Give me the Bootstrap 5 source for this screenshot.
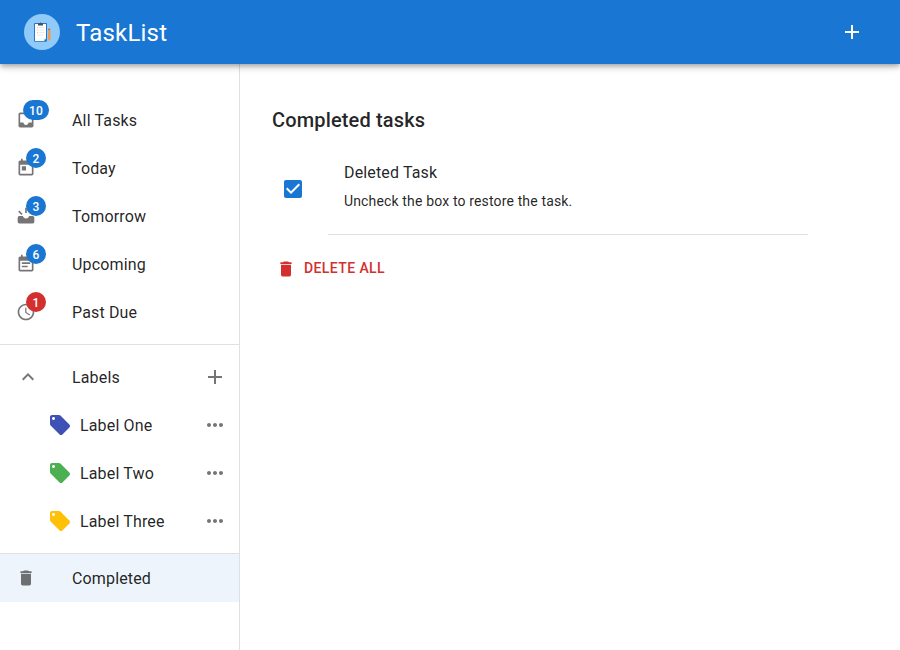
<!DOCTYPE html>
<html lang="en">
<head>
<meta charset="utf-8">
<meta name="viewport" content="width=device-width, initial-scale=1">
<title>TaskList</title>
<link href="https://cdn.jsdelivr.net/npm/bootstrap@5.3.0/dist/css/bootstrap.min.css" rel="stylesheet">
<style>
body{font-family:Roboto,"Liberation Sans",sans-serif;font-size:16px;line-height:24px;letter-spacing:.15px;color:rgba(0,0,0,.87);height:100vh;overflow:hidden}
svg{display:block;fill:currentColor;flex:none}
.i20{width:20px;height:20px}
.i24{width:24px;height:24px}
.appbar{height:64px;padding:0 36px 0 24px;background:#1976d2;z-index:10;box-shadow:0 2px 4px -1px rgba(0,0,0,.2),0 4px 5px 0 rgba(0,0,0,.14),0 1px 10px 0 rgba(0,0,0,.12)}
.brand{font-size:24px;line-height:32px;letter-spacing:.2px;margin-left:16px;padding-top:2px}
.side{width:240px;border-right:1px solid #e0e0e0;padding-top:32px}
.rule{border-top:1px solid #e0e0e0}
.item{height:48px;padding:0 12px 0 16px;color:inherit;text-decoration:none}
.item .lead-icon{width:56px;color:rgba(0,0,0,.54)}
.item .item-text{padding-top:2px}
.item.sub{padding-left:48px}
.item.sub .tag-icon{width:32px}
.item .act{color:rgba(0,0,0,.54)}
.item.active{background:rgba(25,118,210,.08)}
.count{position:absolute;left:20px;top:0;transform:translate(-50%,-50%);min-width:20px;height:20px;padding:1px 6px 0;border-radius:10px;background:#1976d2;color:#fff;font-size:12px;font-weight:500;line-height:20px;letter-spacing:.14px;text-align:center}
.count.late{background:#d32f2f}
.content-area{padding:40px 32px 0}
h1{font-size:20px;font-weight:500;line-height:32px;letter-spacing:.15px;margin:0}
.task{width:536px;padding-top:25px}
.task-check{width:72px;padding:6px 0 0 9px}
.detail{font-size:14px;line-height:20px;letter-spacing:.15px;margin-top:6px}
.task-rule{margin:23px 0 0 56px;width:480px;border-top:1px solid #e0e0e0}
.clear-btn{color:#d32f2f;font-size:14px;font-weight:500;line-height:24px;letter-spacing:.4px;padding:0 4px;border:0;margin-top:21px}
.clear-btn svg{margin-top:2px}
</style>
<script src="https://cdn.jsdelivr.net/npm/bootstrap@5.3.0/dist/js/bootstrap.bundle.min.js"></script>
</head>
<body class="d-flex flex-column bg-white">
<svg class="d-none">
<symbol id="plus" viewBox="0 0 24 24"><path d="M19 13h-6v6h-2v-6H5v-2h6V5h2v6h6v2z"/></symbol>
<symbol id="more" viewBox="0 0 24 24"><path d="M6 10c-1.1 0-2 .9-2 2s.9 2 2 2 2-.9 2-2-.9-2-2-2zm12 0c-1.1 0-2 .9-2 2s.9 2 2 2 2-.9 2-2-.9-2-2-2zm-6 0c-1.1 0-2 .9-2 2s.9 2 2 2 2-.9 2-2-.9-2-2-2z"/></symbol>
<symbol id="label" viewBox="0 0 24 24"><path d="M21.41 11.58l-9-9C12.05 2.22 11.55 2 11 2H4c-1.1 0-2 .9-2 2v7c0 .55.22 1.05.59 1.42l9 9c.36.36.86.58 1.41.58.55 0 1.05-.22 1.41-.59l7-7c.37-.36.59-.86.59-1.41 0-.55-.23-1.06-.59-1.42zM5.5 7C4.67 7 4 6.33 4 5.5S4.67 4 5.5 4 7 4.67 7 5.5 6.33 7 5.5 7z"/></symbol>
<symbol id="trash" viewBox="0 0 24 24"><path d="M6 19c0 1.100.9 2 2 2h8c1.100 0 2-.9 2-2V7H6v12zM18 4h-2.500l-.710-.710c-.180-.180-.440-.290-.700-.290H9.910c-.260 0-.520.110-.700.290L8.500 4H6c-.550 0-1 .450-1 1s.450 1 1 1h12c.550 0 1-.450 1-1s-.450-1-1-1z"/></symbol>
</svg>
<header class="appbar d-flex align-items-center flex-shrink-0 position-relative text-white">
<svg width="36" height="36" viewBox="0 0 36 36"><circle cx="18" cy="18" r="18" fill="#90caf9"/><rect x="10" y="9" width="13" height="18.800" rx=".8" fill="#2876c9"/><path fill="#fff" d="M11 10h11v14.500L19.800 27H11z"/><path fill="#b7d5f2" d="M19.800 27v-2.500H22z"/><path fill="#46535f" d="M14 9.200h1.600a1.100 1.100 0 0 1 2 0H19V11.600h-5z"/><path stroke="#f6bd99" d="M13 13.500h1M13 16h1M13 18.500h1"/><path stroke="#dfe5eb" stroke-width=".8" d="M15.200 13.500H20M15.200 16H20M15.200 18.500H20M13 21h6"/><path fill="#f2994e" d="M24 16h2.400v9.300l-1.200 1.700-1.200-1.700z"/><path fill="#77736e" d="M24.300 14.700h1.800v1.300h-1.800z"/></svg>
<span class="brand">TaskList</span>
<svg class="i24 ms-auto"><use href="#plus"/></svg>
</header>
<div class="d-flex flex-grow-1">
<nav class="side flex-shrink-0">
<a class="item d-flex align-items-center"><span class="lead-icon position-relative"><svg class="i20" viewBox="0 0 24 24"><path d="M19 3H4.990c-1.110 0-1.980.89-1.980 2L3 19c0 1.100.88 2 1.990 2H19c1.100 0 2-.9 2-2V5c0-1.110-.9-2-2-2zm0 12h-4c0 1.660-1.350 3-3 3s-3-1.340-3-3H4.990V5H19v10z"/></svg><span class="count">10</span></span><span class="item-text">All Tasks</span></a>
<a class="item d-flex align-items-center"><span class="lead-icon position-relative"><svg class="i20" viewBox="0 0 24 24"><path d="M19 3h-1V1h-2v2H8V1H6v2H5c-1.110 0-1.990.9-1.990 2L3 19c0 1.100.89 2 2 2h14c1.100 0 2-.9 2-2V5c0-1.100-.9-2-2-2zm0 16H5V8h14v11zM7 10h5v5H7z"/></svg><span class="count">2</span></span><span class="item-text">Today</span></a>
<a class="item d-flex align-items-center"><span class="lead-icon position-relative"><svg class="i20" viewBox="0 0 24 24"><path d="M11 2h2v6.500h-2zM2.600 6.900 4 5.500l4 4-1.400 1.400zM4 12h4.200c.5 1.700 2 3 3.800 3s3.300-1.300 3.800-3H20a2 2 0 0 1 2 2v5a2 2 0 0 1-2 2H4a2 2 0 0 1-2-2v-5a2 2 0 0 1 2-2z"/></svg><span class="count">3</span></span><span class="item-text">Tomorrow</span></a>
<a class="item d-flex align-items-center"><span class="lead-icon position-relative"><svg class="i20" viewBox="0 0 24 24"><path d="M17 10H7v2h10v-2zm2-7h-1V1h-2v2H8V1H6v2H5c-1.110 0-1.990.9-1.990 2L3 19c0 1.100.89 2 2 2h14c1.100 0 2-.9 2-2V5c0-1.100-.9-2-2-2zm0 16H5V8h14v11zm-5-5H7v2h7v-2z"/></svg><span class="count">6</span></span><span class="item-text">Upcoming</span></a>
<a class="item d-flex align-items-center"><span class="lead-icon position-relative"><svg class="i20" viewBox="0 0 24 24"><path d="M11.990 2C6.470 2 2 6.480 2 12s4.470 10 9.990 10C17.520 22 22 17.520 22 12S17.520 2 11.990 2zM12 20c-4.420 0-8-3.580-8-8s3.580-8 8-8 8 3.580 8 8-3.580 8-8 8zM12.500 7H11v6l5.250 3.150.75-1.230-4.500-2.670z"/></svg><span class="count late">1</span></span><span class="item-text">Past Due</span></a>
<div class="rule mt-2 pt-2">
<div class="item d-flex align-items-center"><span class="lead-icon"><svg class="i24" viewBox="0 0 24 24"><path d="M12 8l-6 6 1.410 1.410L12 10.830l4.590 4.580L18 14z"/></svg></span><span class="item-text">Labels</span><svg class="i24 act ms-auto"><use href="#plus"/></svg></div>
<div class="item sub d-flex align-items-center"><span class="tag-icon"><svg class="i24"><use href="#label" fill="#3f51b5"/></svg></span><span class="item-text">Label One</span><svg class="i24 act ms-auto"><use href="#more"/></svg></div>
<div class="item sub d-flex align-items-center"><span class="tag-icon"><svg class="i24"><use href="#label" fill="#4caf50"/></svg></span><span class="item-text">Label Two</span><svg class="i24 act ms-auto"><use href="#more"/></svg></div>
<div class="item sub d-flex align-items-center"><span class="tag-icon"><svg class="i24"><use href="#label" fill="#ffc107"/></svg></span><span class="item-text">Label Three</span><svg class="i24 act ms-auto"><use href="#more"/></svg></div>
</div>
<div class="rule mt-2"><a class="item active d-flex align-items-center"><span class="lead-icon"><svg class="i20"><use href="#trash"/></svg></span><span class="item-text">Completed</span></a></div>
</nav>
<main class="content-area flex-grow-1">
<h1>Completed tasks</h1>
<div class="task">
<div class="d-flex align-items-center">
<div class="task-check"><svg class="i24" viewBox="0 0 24 24"><path fill="#1976d2" d="M19 3H5c-1.110 0-2 .9-2 2v14c0 1.100.89 2 2 2h14c1.110 0 2-.9 2-2V5c0-1.100-.89-2-2-2zm-9 14l-5-5 1.410-1.410L10 14.170l7.590-7.590L19 8l-9 9z"/></svg></div>
<div><div>Deleted Task</div><div class="detail">Uncheck the box to restore the task.</div></div>
</div>
<div class="task-rule"></div>
</div>
<button class="clear-btn btn d-flex align-items-center gap-2 rounded-0"><svg class="i20"><use href="#trash"/></svg>DELETE ALL</button>
</main>
</div>
</body>
</html>
